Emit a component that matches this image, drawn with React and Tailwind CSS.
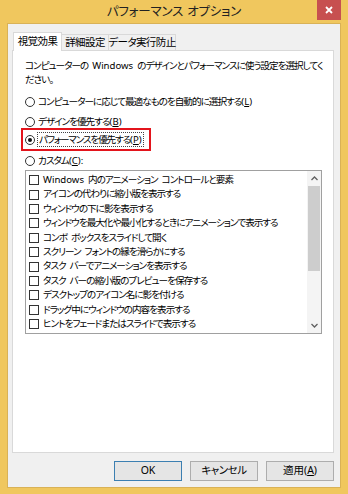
import React from "react";

const items = [
  "Windows 内のアニメーション コントロールと要素",
  "アイコンの代わりに縮小版を表示する",
  "ウィンドウの下に影を表示する",
  "ウィンドウを最大化や最小化するときにアニメーションで表示する",
  "コンボ ボックスをスライドして開く",
  "スクリーン フォントの縁を滑らかにする",
  "タスク バーでアニメーションを表示する",
  "タスク バーの縮小版のプレビューを保存する",
  "デスクトップのアイコン名に影を付ける",
  "ドラッグ中にウィンドウの内容を表示する",
  "ヒントをフェードまたはスライドで表示する",
];

const Win = () => <span className="tracking-[0px]">Windows</span>;

const Acc = ({ k }) => (
  <span className="tracking-[0px]">
    (<u>{k}</u>)
  </span>
);

const withWin = (t) => {
  const parts = t.split("Windows");
  if (parts.length === 1) return t;
  return (
    <>
      {parts[0]}
      <Win />
      {parts[1]}
    </>
  );
};

const Radio = ({ checked }) => (
  <span className="w-[10px] h-[10px] rounded-full border border-[#333] bg-white flex items-center justify-center shrink-0">
    {checked && <span className="w-[4px] h-[4px] rounded-full bg-[#111]" />}
  </span>
);

const Chevron = ({ up }) => (
  <svg width="7" height="5" viewBox="0 0 7 5">
    <path
      d={up ? "M0.5 4 L3.5 1 L6.5 4" : "M0.5 1 L3.5 4 L6.5 1"}
      fill="none"
      stroke="#606060"
      strokeWidth="1.3"
    />
  </svg>
);

const App = () => {
  return (
    <div className="w-[348px] h-[494px] bg-[#f0c75e] flex flex-col px-[7px] pb-[6px] font-['Noto_Sans','Noto_Sans_CJK_JP',sans-serif] [font-feature-settings:'palt'] text-[#000]">
      {/* title bar */}
      <div className="h-[23px] grid grid-cols-[24px_1fr_24px] items-start">
        <div />
        <div className="text-center text-[12.5px] leading-[23px] tracking-[-0.2px] [word-spacing:1px] text-[#222]">
          パフォーマンス オプション
        </div>
        <div className="h-[20px] bg-[#c75050] flex items-center justify-center">
          <svg width="8" height="8" viewBox="0 0 8 8">
            <path d="M1 1 L7 7 M7 1 L1 7" stroke="#fff" strokeWidth="1.8" />
          </svg>
        </div>
      </div>

      {/* client */}
      <div className="flex-1 bg-[#f0f0f0] border border-[#d9b257] flex flex-col pl-[4px] pr-[6px] pt-[7px] pb-[6px] text-[9.6px] tracking-[-1px] [word-spacing:2.5px]">
        {/* tabs */}
        <div className="flex items-end h-[19px] pl-[1px] whitespace-nowrap">
          <div className="h-[19px] w-[49px] bg-white border border-[#d9d9d9] border-b-0 relative z-10 -mb-[1px] flex items-center justify-center text-[10.5px] tracking-[-0.6px]">
            視覚効果
          </div>
          <div className="h-[16px] w-[47px] bg-[#f0f0f0] border border-[#d9d9d9] border-l-0 border-b-0 flex items-center justify-center text-[10.5px] tracking-[-0.6px]">
            詳細設定
          </div>
          <div className="h-[16px] w-[67px] bg-[#f0f0f0] border border-[#d9d9d9] border-l-0 border-b-0 flex items-center justify-center text-[10.5px] tracking-[-0.6px]">
            データ実行防止
          </div>
        </div>

        {/* panel */}
        <div className="flex-1 bg-white border border-[#d9d9d9] flex flex-col pl-[12px] pt-[8px]">
          <div className="leading-[14px] whitespace-nowrap">
            <div>
              コンピューターの <Win /> のデザインとパフォーマンスに使う設定を選択してく
            </div>
            <div>ださい。</div>
          </div>

          <div className="h-[14px] mt-[8px] flex items-center gap-[3px] whitespace-nowrap">
            <Radio />
            <span>
              コンピューターに応じて最適なものを自動的に選択する<Acc k="L" />
            </span>
          </div>
          <div className="h-[14px] mt-[6px] flex items-center gap-[3px] whitespace-nowrap">
            <Radio />
            <span>
              デザインを優先する<Acc k="B" />
            </span>
          </div>
          <div className="h-[23px] w-[130px] -ml-[4px] -mt-[1px] border-2 border-[#e3141c] flex items-center gap-[2px] pl-[2px] whitespace-nowrap">
            <Radio checked />
            <span className="border border-dotted border-[#444] px-[1px] leading-[13px] tracking-[-1.15px]">
              パフォーマンスを優先する<Acc k="P" />
            </span>
          </div>
          <div className="h-[14px] mt-[3px] flex items-center gap-[3px] whitespace-nowrap">
            <Radio />
            <span>
              カスタム<Acc k="C" />:
            </span>
          </div>

          {/* list */}
          <div className="mt-[2px] w-[297px] h-[164px] border border-[#a0a0a0] flex">
            <div className="flex-1 pt-[2px] pl-[3px] overflow-hidden">
              {items.map((t) => (
                <div key={t} className="h-[14.4px] flex items-center gap-[4px] whitespace-nowrap">
                  <span className="w-[10px] h-[10px] border border-[#333] bg-white shrink-0" />
                  <span>{withWin(t)}</span>
                </div>
              ))}
            </div>
            <div className="w-[14px] bg-[#f4f4f4] flex flex-col">
              <div className="h-[15px] flex items-center justify-center">
                <Chevron up />
              </div>
              <div className="h-[85px] bg-[#cdcdcd] mx-[1px]" />
              <div className="flex-1" />
              <div className="h-[15px] flex items-center justify-center">
                <Chevron />
              </div>
            </div>
          </div>
        </div>

        {/* buttons */}
        <div className="mt-[8px] flex justify-end gap-[8px] tracking-normal">
          <button className="w-[68px] h-[20px] bg-[#e5e5e5] border border-[#3c7fb1] text-[10.5px]">
            OK
          </button>
          <button className="w-[68px] h-[20px] bg-[#e5e5e5] border border-[#adadad] text-[10.5px] tracking-[-0.5px]">
            キャンセル
          </button>
          <button className="w-[68px] h-[20px] bg-[#e5e5e5] border border-[#adadad] text-[10.5px]">
            適用<Acc k="A" />
          </button>
        </div>
      </div>
    </div>
  );
};

export default App;
